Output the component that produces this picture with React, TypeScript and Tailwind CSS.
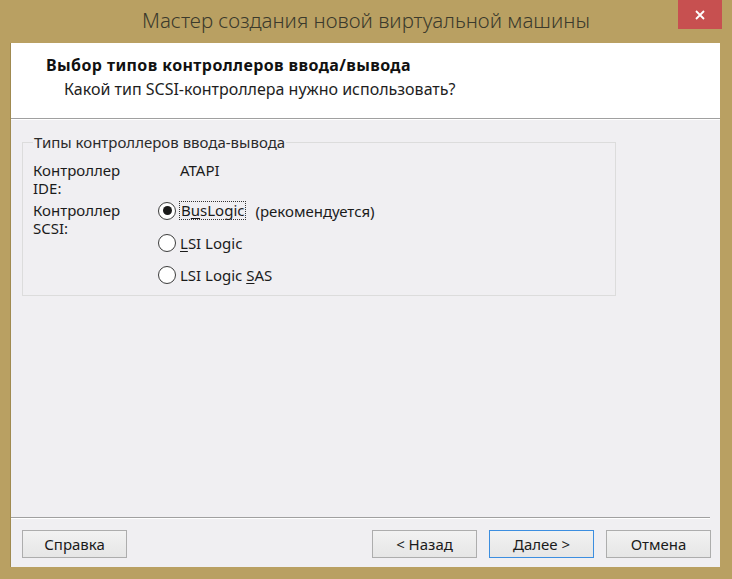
import React from "react"

const font = { fontFamily: '"Noto Sans", "Open Sans", sans-serif' }

function Radio({ checked }: { checked?: boolean }) {
  return (
    <span className="flex h-[18px] w-[18px] shrink-0 items-center justify-center rounded-full border border-[#3c3c3c] bg-white">
      {checked && <span className="h-[9px] w-[9px] rounded-full bg-[#1a1a1a]" />}
    </span>
  )
}

function Btn({ children, primary }: { children: React.ReactNode; primary?: boolean }) {
  return (
    <button
      className={
        primary
          ? "flex h-[28px] w-[105px] items-center justify-center border border-[#3c8ee0] bg-gradient-to-b from-[#f2f2f2] to-[#e6e6e6] text-[15px] text-[#1b1b1b]"
          : "flex h-[28px] w-[105px] items-center justify-center border border-[#adadad] bg-gradient-to-b from-[#f2f2f2] to-[#e6e6e6] text-[15px] text-[#1b1b1b]"
      }
    >
      {children}
    </button>
  )
}

export default function App() {
  return (
    <div className="flex h-[579px] w-[732px] flex-col bg-[#b9a062] text-[#1b1b1b]" style={font}>
      {/* title bar */}
      <div className="relative flex h-[43px] shrink-0 items-center justify-center pb-[2px]">
        <span className="text-[20.5px] font-light text-[#3b3a2c]">Мастер создания новой виртуальной машины</span>
        <div className="absolute right-[10px] top-0 flex h-[29px] w-[44px] items-center justify-center bg-[#c75050]">
          <svg width="10" height="10" viewBox="0 0 10 10">
            <path d="M1 1 L9 9 M9 1 L1 9" stroke="#fff" strokeWidth="1.8" />
          </svg>
        </div>
      </div>

      <div className="mb-[12px] ml-[10px] mr-[12px] flex flex-1 flex-col border-l border-[#a08a50] bg-[#f0eff2]">
        {/* header */}
        <div className="flex h-[76px] shrink-0 flex-col border-b border-[#a0a0a0] bg-white pl-[35px] pt-[11px]">
          <div className="text-[16px] font-bold leading-[22px] tracking-[0.4px] text-[#111]">Выбор типов контроллеров ввода/вывода</div>
          <div className="pl-[18px] pt-[2px] text-[16px] leading-[22px] text-[#1e1e1e]">Какой тип SCSI-контроллера нужно использовать?</div>
        </div>
        <div className="h-px bg-white" />

        {/* body */}
        <div className="flex flex-1 flex-col px-[11px] pt-[13px]">
          <fieldset className="w-[594px] border border-[#dcdcdc] px-[10px] pb-[11px]">
            <legend className="px-[1px] text-[15px] leading-[18px] text-[#2b2b2b]">Типы контроллеров ввода-вывода</legend>
            <div className="grid grid-cols-[125px_1fr] pt-[10px] text-[15px] leading-[18px]">
              <div>Контроллер<br />IDE:</div>
              <div className="pl-[22px]">ATAPI</div>
              <div className="pt-[4px]">Контроллер<br />SCSI:</div>
              <div className="flex flex-col gap-[14px] pt-[4px]">
                <div className="flex items-center gap-[3px]">
                  <Radio checked />
                  <span className="border border-dotted border-[#333] px-[1px] leading-[17px]">
                    B<span className="underline underline-offset-2">u</span>sLogic
                  </span>
                  <span className="pl-[6px]">(рекомендуется)</span>
                </div>
                <div className="flex items-center gap-[4px]">
                  <Radio />
                  <span>
                    <span className="underline underline-offset-2">L</span>SI Logic
                  </span>
                </div>
                <div className="flex items-center gap-[4px]">
                  <Radio />
                  <span>
                    LSI Logic <span className="underline underline-offset-2">S</span>AS
                  </span>
                </div>
              </div>
            </div>
          </fieldset>
        </div>

        {/* footer */}
        <div className="mr-[10px] h-px bg-[#a0a0a0]" />
        <div className="mr-[10px] h-px bg-white" />
        <div className="flex h-[48px] shrink-0 items-start pl-[11px] pr-[9px] pt-[11px]">
          <Btn>Справка</Btn>
          <div className="flex-1" />
          <div className="flex gap-[12px]">
            <Btn>&lt; Назад</Btn>
            <Btn primary>Далее &gt;</Btn>
            <Btn>Отмена</Btn>
          </div>
        </div>
      </div>
    </div>
  )
}
